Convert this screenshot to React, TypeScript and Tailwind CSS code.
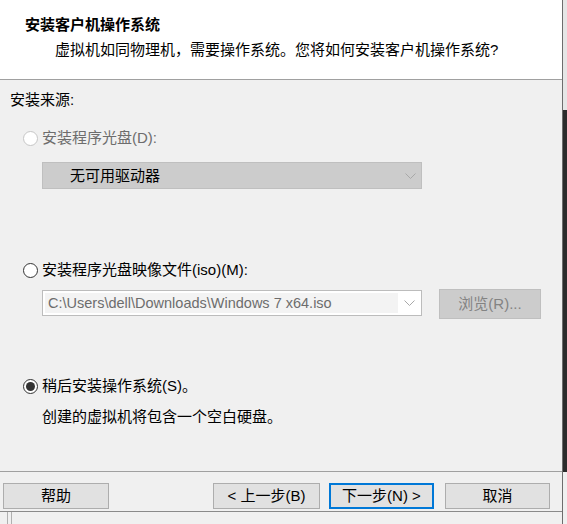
import React from 'react';

const font = { fontFamily: '"Liberation Sans","Noto Sans CJK SC",sans-serif' };

type RadioProps = { checked?: boolean; disabled?: boolean };

// Windows 10 style radio circle
const Radio: React.FC<RadioProps> = ({ checked, disabled }) => (
  <span
    className={`w-[15px] h-[15px] rounded-full border flex items-center justify-center bg-white ${
      disabled ? 'border-[#c6c6c6]' : 'border-[#333333]'
    }`}
  >
    {checked && <span className="w-[9px] h-[9px] rounded-full bg-[#333333]" />}
  </span>
);

const Chevron: React.FC<{ color: string }> = ({ color }) => (
  <svg width="11" height="6" viewBox="0 0 11 6" className="shrink-0">
    <polyline points="0.5,0.5 5.5,5.5 10.5,0.5" fill="none" stroke={color} strokeWidth="1" />
  </svg>
);

const Button: React.FC<{ label: React.ReactNode; width: string; primary?: boolean }> = ({ label, width, primary }) => (
  <div
    className={`${width} h-[26px] flex items-center justify-center bg-[#e1e1e1] text-[15px] leading-[18px] text-black ${
      primary ? 'border-2 border-[#0078d7]' : 'border border-[#adadad]'
    }`}
  >
    {label}
  </div>
);

export default function App() {
  return (
    <div className="w-[567px] h-[524px] flex bg-[#f0f0f0] overflow-hidden" style={font}>
      {/* dialog */}
      <div className="w-[562px] h-full flex flex-col">
        <div className="h-[512px] flex flex-col border-b border-[#8a8a8a]">
          {/* Header */}
          <div className="h-[80px] bg-white border-b border-[#a0a0a0] shrink-0">
            <div className="pt-[16px] pl-[25px] text-[15px] font-bold leading-[18px] text-black">安装客户机操作系统</div>
            <div className="mt-[7px] pl-[55px] text-[15px] leading-[18px] text-black">
              虚拟机如同物理机，需要操作系统。您将如何安装客户机操作系统?
            </div>
          </div>

          {/* Body */}
          <div className="flex-1 flex flex-col text-[15px] leading-[18px] text-black">
            <div className="mt-[11px] pl-[10px]">安装来源:</div>

            <div className="mt-[20px] pl-[23px] flex items-center gap-[4px] text-[#6d6d6d]">
              <Radio disabled />
              <span>安装程序光盘(D):</span>
            </div>
            <div className="mt-[15px] ml-[42px] w-[380px] h-[27px] bg-[#cccccc] border border-[#bfbfbf] flex items-center pl-[27px] pr-[5px]">
              <span className="flex-1">无可用驱动器</span>
              <Chevron color="#a8a8a8" />
            </div>

            <div className="mt-[72px] pl-[23px] flex items-center gap-[4px]">
              <Radio />
              <span>安装程序光盘映像文件(iso)(M):</span>
            </div>
            <div className="mt-[10px] ml-[42px] flex items-start">
              <div className="mt-[1px] w-[380px] h-[26px] bg-white border border-[#bcbcbc] flex items-center p-[2px] pr-[6px]">
                <div className="w-[353px] h-full bg-[#f3f3f3] flex items-center pl-[3px] text-[14.5px] text-[#6d6d6d] whitespace-nowrap overflow-hidden">
                  C:\Users\dell\Downloads\Windows 7 x64.iso
                </div>
                <div className="flex-1 flex justify-end">
                  <Chevron color="#a8a8a8" />
                </div>
              </div>
              <div className="ml-[17px] w-[102px] h-[30px] bg-[#cccccc] border border-[#bfbfbf] flex items-center justify-center text-[#838383]">
                浏览(R)...
              </div>
            </div>

            <div className="mt-[58px] pl-[23px] flex items-center gap-[4px]">
              <Radio checked />
              <span>稍后安装操作系统(S)。</span>
            </div>
            <div className="mt-[13px] pl-[42px]">创建的虚拟机将包含一个空白硬盘。</div>
          </div>

          {/* Footer */}
          <div className="h-[40px] border-t border-[#a0a0a0] shrink-0 pt-[11px] flex items-start">
            <div className="ml-[3px]">
              <Button label="帮助" width="w-[106px]" />
            </div>
            <div className="ml-[104px]">
              <Button label="< 上一步(B)" width="w-[107px]" />
            </div>
            <div className="ml-[9px]">
              <Button label="下一步(N) >" width="w-[105px]" primary />
            </div>
            <div className="ml-[11px]">
              <Button label="取消" width="w-[105px]" />
            </div>
          </div>
        </div>
        <div className="flex-1 flex">
          <div className="ml-[7px] w-px bg-[#b0b0b0]" />
          <div className="ml-[3px] w-px bg-[#b0b0b0]" />
        </div>
      </div>
      {/* right edge */}
      <div className="w-px h-full bg-[#6d6d6d]" />
      <div className="flex-1 flex flex-col">
        <div className="h-[110px] bg-[#e6e6e6]" />
        <div className="h-[362px] bg-[#2b2b2b]" />
        <div className="flex-1 bg-[#f0f0f0]" />
      </div>
    </div>
  );
}
